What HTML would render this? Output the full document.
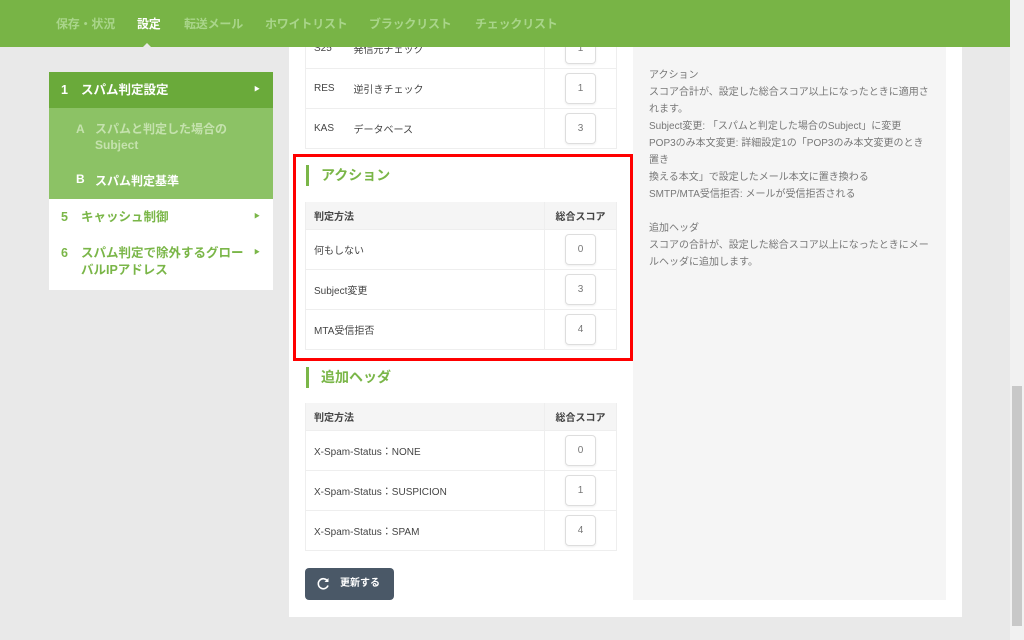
<!DOCTYPE html>
<html><head><meta charset="utf-8"><style>
*{margin:0;padding:0;box-sizing:border-box}
body{width:1024px;height:640px;overflow:hidden;background:#e9e9e9;font-family:"Liberation Sans","Noto Sans CJK JP",sans-serif;position:relative;color:#444}
.hdr{position:absolute;left:0;top:0;width:1010px;height:47px;background:#78b446}
.hdr span{position:absolute;top:15px;font-size:12px;font-weight:bold;color:#a9d58a;letter-spacing:-0.2px}
.hdr span.on{color:#fff}
.caret{position:absolute;left:143px;top:43px;border:4px solid transparent;border-bottom-color:#e9e9e9;border-top:0}
.sb{position:absolute;left:1010px;top:0;width:14px;height:640px;background:#f1f1f1}
.thumb{position:absolute;left:1012px;top:386px;width:10px;height:240px;background:#c8c8c8}
.menu{position:absolute;left:49px;top:72px;width:224px}
.m{position:relative;font-size:12.5px;font-weight:bold;padding-left:32px;color:#7ab648;background:#fff}
.m .n{position:absolute;left:12px}
.m .a{position:absolute;right:13px;font-size:6px}
.main{position:absolute;left:289px;top:47px;width:673px;height:570px;background:#fff}
.help{position:absolute;left:633px;top:47px;width:313px;height:553px;background:#f5f5f5;padding:20px 16px;font-size:10px;line-height:17px;color:#777}
table{position:absolute;left:305px;width:312px;border-collapse:collapse;font-size:10px;color:#444}
td{border-top:1px solid #eee;height:40px;padding-left:8px}
td.s{width:72px;border-left:1px solid #eee;padding:0;text-align:center}
.box{display:inline-block;width:31px;height:31px;border:1px solid #ddd;border-radius:4px;line-height:29px;color:#777;text-align:center;box-shadow:0 1px 2px #eee}
th{background:#f5f5f5;height:27px;font-weight:bold;font-size:10px;text-align:left;padding-left:8px}
th.s{text-align:center;padding:0;border-left:1px solid #eee}
table.t{border-bottom:1px solid #eee;border-right:1px solid #eee;border-left:1px solid #eee}
.h2{position:absolute;left:306px;height:21px;border-left:3px solid #7ab648;padding-left:12px;font-size:14px;font-weight:bold;color:#7ab648;line-height:20px}
.red{position:absolute;left:293px;top:154px;width:340px;height:207px;border:3px solid #f00}
.btn{position:absolute;left:305px;top:568px;width:89px;height:32px;background:#4a5867;border-radius:4px;color:#fff;font-size:10px;font-weight:bold;line-height:32px;padding-left:35px}
</style></head><body>
<div class="menu">
<div class="m" style="background:#6aaa3a;color:#fff;height:36px;line-height:36px"><span class="n">1</span>スパム判定設定<span class="a">▶</span></div>
<div style="background:#8cc265;height:91px;position:relative">
<div style="position:absolute;left:27px;top:13px;font-size:12px;font-weight:bold;color:#c5e2ae;line-height:16px;padding-left:19px"><span style="position:absolute;left:0">A</span>スパムと判定した場合の<br>Subject</div>
<div style="position:absolute;left:27px;top:64px;font-size:12px;font-weight:bold;color:#fff;padding-left:19px"><span style="position:absolute;left:0">B</span>スパム判定基準</div>
</div>
<div class="m" style="height:36px;line-height:36px"><span class="n">5</span>キャッシュ制御<span class="a">▶</span></div>
<div class="m" style="height:55px;padding-top:10px;line-height:17px"><span class="n">6</span>スパム判定で除外するグロー<br>バルIPアドレス<span class="a" style="top:10px">▶</span></div>
</div>
<div class="main"></div>
<div class="help">アクション<br>スコア合計が、設定した総合スコア以上になったときに適用されます。<br>Subject変更: 「スパムと判定した場合のSubject」に変更<br>POP3のみ本文変更: 詳細設定1の「POP3のみ本文変更のとき置き<br>換える本文」で設定したメール本文に置き換わる<br>SMTP/MTA受信拒否: メールが受信拒否される<br><br>追加ヘッダ<br>スコアの合計が、設定した総合スコア以上になったときにメールヘッダに追加します。</div>
<table class="t" style="top:28px"><tr><td style="width:40px">S25</td><td>発信元チェック</td><td class="s"><span class="box">1</span></td></tr>
<tr><td>RES</td><td>逆引きチェック</td><td class="s"><span class="box">1</span></td></tr>
<tr><td>KAS</td><td>データベース</td><td class="s"><span class="box">3</span></td></tr></table>
<div class="hdr"><span style="left:56px">保存・状況</span><span class="on" style="left:137px">設定</span><span style="left:184px">転送メール</span><span style="left:265px">ホワイトリスト</span><span style="left:369px">ブラックリスト</span><span style="left:475px">チェックリスト</span><div class="caret"></div></div>
<div class="h2" style="top:165px">アクション</div>
<table class="t" style="top:202px"><tr><th>判定方法</th><th class="s">総合スコア</th></tr>
<tr><td>何もしない</td><td class="s"><span class="box">0</span></td></tr>
<tr><td>Subject変更</td><td class="s"><span class="box">3</span></td></tr>
<tr><td>MTA受信拒否</td><td class="s"><span class="box">4</span></td></tr></table>
<div class="red"></div>
<div class="h2" style="top:367px">追加ヘッダ</div>
<table class="t" style="top:403px"><tr><th>判定方法</th><th class="s">総合スコア</th></tr>
<tr><td>X-Spam-Status：NONE</td><td class="s"><span class="box">0</span></td></tr>
<tr><td>X-Spam-Status：SUSPICION</td><td class="s"><span class="box">1</span></td></tr>
<tr><td>X-Spam-Status：SPAM</td><td class="s"><span class="box">4</span></td></tr></table>
<div class="btn"><svg style="position:absolute;left:11px;top:9px" width="14" height="14" viewBox="0 0 14 14"><path d="M11.5 4A5 5 0 1 0 12 8.5" fill="none" stroke="#fff" stroke-width="1.6"/><path d="M12.5 1v4h-4z" fill="#fff"/></svg>更新する</div>
<div class="sb"></div><div class="thumb"></div>
</body></html>
